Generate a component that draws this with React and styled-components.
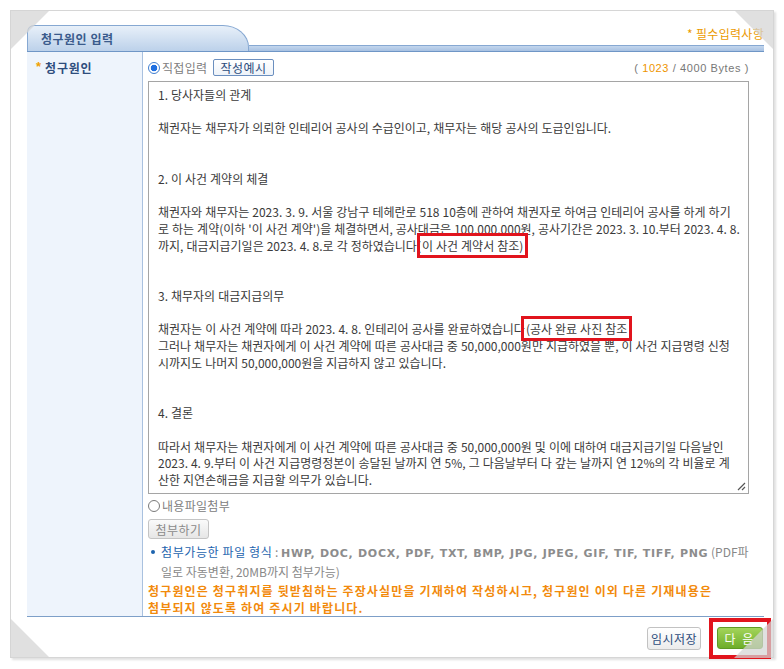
import React from "react";
import styled, { createGlobalStyle } from "styled-components";

const GlobalStyle = createGlobalStyle`
  html, body {
    margin: 0;
    padding: 0;
    background: #ffffff;
  }
  body {
    font-family: "Liberation Sans", "Noto Sans CJK KR", sans-serif;
    font-size: 12px;
    color: #333;
  }
`;

const Page = styled.div`
  padding: 10px 0 0 10px;
  width: 784px;
  height: 669px;
  box-sizing: border-box;
`;

const Frame = styled.div`
  position: relative;
  width: 764px;
  height: 648px;
  box-sizing: border-box;
  border: 1px solid #d6d6d6;
  box-shadow: 2px 2px 2px rgba(0, 0, 0, 0.12);
  padding: 13px 9px 0 16px;
  background: #fff;
`;

const cornerShapes = {
  tl: "top: -1px; left: -1px; clip-path: polygon(0 0, 100% 0, 0 100%);",
  tr: "top: -1px; right: -1px; clip-path: polygon(0 0, 100% 0, 100% 100%);",
  bl: "bottom: -1px; left: -1px; clip-path: polygon(0 0, 100% 100%, 0 100%);",
  br: "bottom: -1px; right: -1px; clip-path: polygon(100% 0, 100% 100%, 0 100%);",
};

const Corner = styled.div`
  position: absolute;
  width: 40px;
  height: 40px;
  background: rgba(212, 212, 212, 0.72);
  z-index: 5;
  ${({ $pos }) => cornerShapes[$pos]}
`;

const Header = styled.div`
  display: flex;
  align-items: flex-end;
  height: 27px;
  border-bottom: 1px solid #6f96c6;
`;

const Tab = styled.div`
  width: 222px;
  height: 26px;
  box-sizing: border-box;
  border: 1px solid #86a8d2;
  border-bottom: none;
  border-radius: 7px 26px 0 0 / 7px 22px 0 0;
  background: linear-gradient(#e8f0f9, #bcd1ea);
  display: flex;
  align-items: center;
  padding-left: 13px;
`;

const TabTitle = styled.span`
  font-family: "Noto Sans CJK KR", sans-serif;
  font-weight: bold;
  font-size: 12px;
  color: #3a5b8c;
  letter-spacing: 0.5px;
`;

const HeaderRight = styled.div`
  flex: 1;
  height: 100%;
  display: flex;
  flex-direction: column;
  justify-content: space-between;
`;

const Required = styled.div`
  text-align: right;
  padding-top: 1px;
  font-family: "Noto Sans CJK KR", sans-serif;
  font-size: 12px;
  color: #eb9a00;
  letter-spacing: 0.3px;
`;

const Strip = styled.div`
  height: 5px;
  border-top: 1px solid #86a8d2;
  background: linear-gradient(#c3d6ed, #a7c1e2);
`;

const Table = styled.div`
  display: flex;
  height: 564px;
  border-bottom: 1px solid #7d9fc8;
`;

const LabelCell = styled.div`
  flex: none;
  width: 116px;
  background: #eef4fc;
  border-right: 1px solid #a9c1df;
  padding: 8px 0 0 9px;
  box-sizing: border-box;
  display: flex;
  align-items: flex-start;
  gap: 4px;
`;

const Star = styled.span`
  color: #f0a000;
  font-weight: bold;
  font-size: 13px;
  line-height: 12px;
  padding-top: 1px;
`;

const LabelText = styled.span`
  font-family: "Noto Sans CJK KR", sans-serif;
  font-weight: bold;
  font-size: 12px;
  color: #2e4d7d;
  letter-spacing: 0.8px;
  line-height: 16px;
`;

const ContentCell = styled.div`
  flex: 1;
  min-width: 0;
  padding: 6px 15px 0 5px;
  display: flex;
  flex-direction: column;
`;

const ToolRow = styled.div`
  display: flex;
  align-items: center;
  height: 20px;
`;

const Radio = styled.span`
  width: 12px;
  height: 12px;
  box-sizing: border-box;
  border-radius: 50%;
  border: 1px solid ${({ $checked }) => ($checked ? "#3f7ed0" : "#7a7a7a")};
  background: ${({ $checked }) =>
    $checked
      ? "radial-gradient(circle, #1f6fe0 0 3px, #fff 3.6px)"
      : "#fff"};
  margin-right: 2px;
  flex: none;
`;

const RadioLabel = styled.span`
  font-family: "Noto Sans CJK KR", sans-serif;
  font-size: 12px;
  color: #808080;
  letter-spacing: 0.3px;
`;

const ExampleButton = styled.button`
  margin-left: 6px;
  height: 17px;
  padding: 0 6px;
  border: 1px solid #6b8fbf;
  border-radius: 2px;
  background: linear-gradient(#ffffff, #eef3f9);
  font-family: "Noto Sans CJK KR", sans-serif;
  font-size: 12px;
  line-height: 14px;
  color: #2c4c7c;
  letter-spacing: 0.5px;
`;

const ByteCount = styled.span`
  margin-left: auto;
  font-family: "Liberation Sans", sans-serif;
  font-size: 11px;
  color: #777;
  white-space: pre;
  letter-spacing: 0.6px;
`;

const Count = styled.span`
  color: #ee9400;
`;

const TextBox = styled.div`
  position: relative;
  min-width: 0;
  margin-top: 3px;
  height: 415px;
  box-sizing: border-box;
  border: 1px solid #a5a5a5;
  padding: 5px 9px 0 9px;
  overflow: hidden;
  font-family: "Noto Sans CJK KR", sans-serif;
  font-size: 12px;
  line-height: 16.75px;
  word-spacing: 0.3px;
  color: #3a3a3a;
`;

const TextLine = styled.div`
  white-space: pre;
  height: 16.75px;
`;

const Mark = styled.span`
  outline: 3px solid #e1141d;
  outline-offset: 1px;
  padding: 0 1px;
`;

const Grip = styled.svg`
  position: absolute;
  right: 2px;
  bottom: 2px;
`;

const AttachRow = styled(ToolRow)`
  margin-top: 2px;
  height: 19px;
`;

const GreyButton = styled.button`
  align-self: flex-start;
  margin-top: 4px;
  height: 20px;
  width: 61px;
  padding: 0;
  border: 1px solid #c4c4c4;
  border-radius: 3px;
  background: linear-gradient(#fafafa, #e6e6e6);
  font-family: "Noto Sans CJK KR", sans-serif;
  font-size: 12px;
  color: #8a8a8a;
  letter-spacing: 0.5px;
`;

const FormatNote = styled.div`
  margin-top: 4px;
  padding-left: 13px;
  position: relative;
  font-family: "Noto Sans CJK KR", sans-serif;
  font-size: 12px;
  line-height: 18px;
  color: #888;
  white-space: nowrap;
  &::before {
    content: "";
    position: absolute;
    left: 3px;
    top: 7px;
    width: 4px;
    height: 4px;
    border-radius: 50%;
    background: #1d64ae;
  }
`;

const Blue = styled.span`
  color: #1d64ae;
  letter-spacing: 0.6px;
`;

const Formats = styled.span`
  font-family: "DejaVu Sans", sans-serif;
  font-weight: bold;
  font-size: 11px;
  color: #8c8c8c;
  letter-spacing: 0.7px;
`;

const Warning = styled.div`
  margin-top: 1px;
  font-family: "Noto Sans CJK KR", sans-serif;
  font-weight: bold;
  font-size: 12px;
  line-height: 17px;
  color: #f28a0c;
  letter-spacing: 1.15px;
  white-space: pre;
`;

const Footer = styled.div`
  display: flex;
  justify-content: flex-end;
  align-items: center;
  gap: 8px;
  padding-top: 1px;
  margin-right: -7px;
`;

const SaveButton = styled.button`
  height: 23px;
  width: 54px;
  padding: 0;
  border: 1px solid #c2c2c2;
  border-radius: 3px;
  background: linear-gradient(#ffffff, #ececec);
  font-family: "Noto Sans CJK KR", sans-serif;
  font-size: 12px;
  color: #2d4c7c;
  letter-spacing: 0.5px;
`;

const RedFrame = styled.span`
  display: inline-flex;
  border: 4px solid #e1141d;
  padding: 5px 4px 6px;
`;

const NextButton = styled.button`
  height: 22px;
  width: 46px;
  padding: 0;
  border: 1px solid #5e9a24;
  border-radius: 3px;
  background: linear-gradient(#a3d45a, #6eae2a);
  font-family: "Noto Sans CJK KR", sans-serif;
  font-size: 12px;
  color: #ffffff;
  letter-spacing: 2px;
`;

const lines = [
  "1. 당사자들의 관계",
  "",
  "채권자는 채무자가 의뢰한 인테리어 공사의 수급인이고, 채무자는 해당 공사의 도급인입니다.",
  "",
  "",
  "2. 이 사건 계약의 체결",
  "",
  "채권자와 채무자는 2023. 3. 9. 서울 강남구 테헤란로 518 10층에 관하여 채권자로 하여금 인테리어 공사를 하게 하기",
  "로 하는 계약(이하 '이 사건 계약')을 체결하면서, 공사대금은 100,000,000원, 공사기간은 2023. 3. 10.부터 2023. 4. 8.",
  ["까지, 대금지급기일은 2023. 4. 8.로 각 정하였습니다(", "이 사건 계약서 참조)", ""],
  "",
  "",
  "3. 채무자의 대금지급의무",
  "",
  ["채권자는 이 사건 계약에 따라 2023. 4. 8. 인테리어 공사를 완료하였습니다", "(공사 완료 사진 참조", ""],
  "그러나 채무자는 채권자에게 이 사건 계약에 따른 공사대금 중 50,000,000원만 지급하였을 뿐, 이 사건 지급명령 신청",
  "시까지도 나머지 50,000,000원을 지급하지 않고 있습니다.",
  "",
  "",
  "4. 결론",
  "",
  "따라서 채무자는 채권자에게 이 사건 계약에 따른 공사대금 중 50,000,000원 및 이에 대하여 대금지급기일 다음날인",
  "2023. 4. 9.부터 이 사건 지급명령정본이 송달된 날까지 연 5%, 그 다음날부터 다 갚는 날까지 연 12%의 각 비율로 계",
  "산한 지연손해금을 지급할 의무가 있습니다.",
];

export default function App() {
  return (
    <Page>
      <GlobalStyle />
      <Frame>
        <Corner $pos="tl" />
        <Corner $pos="tr" />
        <Corner $pos="bl" />
        <Corner $pos="br" />

        <Header>
          <Tab>
            <TabTitle>청구원인 입력</TabTitle>
          </Tab>
          <HeaderRight>
            <Required>* 필수입력사항</Required>
            <Strip />
          </HeaderRight>
        </Header>

        <Table>
          <LabelCell>
            <Star>*</Star>
            <LabelText>청구원인</LabelText>
          </LabelCell>
          <ContentCell>
            <ToolRow>
              <Radio $checked />
              <RadioLabel>직접입력</RadioLabel>
              <ExampleButton>작성예시</ExampleButton>
              <ByteCount>
                {"( "}
                <Count>1023</Count>
                {" / 4000 Bytes )"}
              </ByteCount>
            </ToolRow>

            <TextBox>
              {lines.map((line, i) =>
                Array.isArray(line) ? (
                  <TextLine key={i}>
                    {line[0]}
                    <Mark>{line[1]}</Mark>
                    {line[2]}
                  </TextLine>
                ) : (
                  <TextLine key={i}>{line}</TextLine>
                )
              )}
              <Grip width="9" height="9" viewBox="0 0 9 9">
                <path d="M8 1 L1 8 M8 5 L5 8" stroke="#555" strokeWidth="1.2" />
              </Grip>
            </TextBox>

            <AttachRow>
              <Radio />
              <RadioLabel>내용파일첨부</RadioLabel>
            </AttachRow>
            <GreyButton>첨부하기</GreyButton>

            <FormatNote>
              <Blue>첨부가능한 파일 형식</Blue>
              {" : "}
              <Formats>
                HWP, DOC, DOCX, PDF, TXT, BMP, JPG, JPEG, GIF, TIF, TIFF, PNG
              </Formats>
              {" (PDF파"}
              <br />
              {"일로 자동변환, 20MB까지 첨부가능)"}
            </FormatNote>

            <Warning>
              {"청구원인은 청구취지를 뒷받침하는 주장사실만을 기재하여 작성하시고, 청구원인 이외 다른 기재내용은\n첨부되지 않도록 하여 주시기 바랍니다."}
            </Warning>
          </ContentCell>
        </Table>

        <Footer>
          <SaveButton>임시저장</SaveButton>
          <RedFrame>
            <NextButton>다 음</NextButton>
          </RedFrame>
        </Footer>
      </Frame>
    </Page>
  );
}
